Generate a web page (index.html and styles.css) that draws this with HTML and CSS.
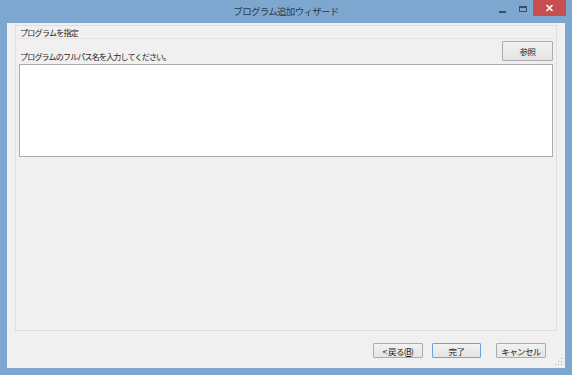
FILE: index.html
```html
<!DOCTYPE html>
<html>
<head>
    <title>プログラム追加ウィザード</title>
    <link rel="stylesheet" href="styles.css">
</head>
<body>
    <div class="window">
        <div class="titlebar">
            <div></div>
            <div class="title">プログラム追加ウィザード</div>
            <div class="controls">
                <span class="ctl-min"></span>
                <span class="ctl-max"></span>
                <span class="ctl-close">
                    <svg width="9" height="8" viewBox="0 0 9 8"><path d="M1.5 1 L7.5 7 M7.5 1 L1.5 7" stroke="#fff" stroke-width="1.6"/></svg>
                </span>
            </div>
        </div>

        <div class="client">
            <div class="page">
                <div class="group-head">プログラムを指定</div>
                <div class="browse-row">
                    <span class="label">プログラムのフルパス名を入力してください。</span>
                    <button class="btn browse-btn">参照</button>
                </div>
                <div class="path-box"></div>
            </div>

            <div class="footer">
                <button class="btn">&lt;&nbsp;戻る(<u>B</u>)</button>
                <button class="btn default-btn">完了</button>
                <button class="btn cancel-btn">キャンセル</button>
            </div>

            <!-- サイズ変更グリップ -->
            <svg class="grip" width="8" height="8" viewBox="0 0 8 8">
                <rect x="6" y="0" width="1" height="1" fill="#a8a8a8"/>
                <rect x="3" y="3" width="1" height="1" fill="#a8a8a8"/>
                <rect x="6" y="3" width="1" height="1" fill="#a8a8a8"/>
                <rect x="0" y="6" width="1" height="1" fill="#a8a8a8"/>
                <rect x="3" y="6" width="1" height="1" fill="#a8a8a8"/>
                <rect x="6" y="6" width="1" height="1" fill="#a8a8a8"/>
            </svg>
        </div>
    </div>
</body>
</html>
```

FILE: styles.css
```css
body {
    margin: 0;
    font-family: "Noto Sans CJK JP", "Noto Sans", sans-serif;
    background-color: #7ea7cf;
}
.window {
    display: flex;
    flex-direction: column;
    width: 572px;
    height: 375px;
    background-color: #7ea7cf;
}
.titlebar {
    display: grid;
    grid-template-columns: 1fr auto 1fr;
    height: 23px;
}
.title {
    font-size: 9.5px;
    letter-spacing: -0.7px;
    line-height: 23px;
    color: #2b3a4a;
}
.controls {
    display: flex;
    justify-content: flex-end;
    align-items: flex-start;
    padding-right: 6px;
}
.ctl-min {
    width: 7px;
    height: 2px;
    margin-top: 11px;
    margin-right: 13px;
    background-color: #3a4f66;
}
.ctl-max {
    box-sizing: border-box;
    width: 8px;
    height: 6px;
    margin-top: 6px;
    margin-right: 6px;
    border: 1px solid #3a4f66;
    border-top-width: 2px;
}
.ctl-close {
    display: flex;
    align-items: center;
    justify-content: center;
    width: 33px;
    height: 16px;
    background-color: #c74e4e;
}
.client {
    position: relative;
    flex: 1;
    display: flex;
    flex-direction: column;
    margin: 0 7px 7px 7px;
    background-color: #f0f0f0;
}
.page {
    display: flex;
    flex-direction: column;
    height: 306px;
    margin: 2px 8px 0 8px;
    padding: 0 3px;
    border: 1px solid #dedede;
    box-sizing: border-box;
    background-color: #f0f0f0;
}
.group-head {
    height: 10px;
    padding: 2px 1px 0 1px;
    font-size: 8px;
    line-height: 10px;
    letter-spacing: -0.7px;
    color: #1e1e1e;
    border-bottom: 1px solid #e2e2e2;
}
.browse-row {
    display: flex;
    justify-content: space-between;
    align-items: flex-end;
    height: 23px;
    padding: 0 0 2px 1px;
}
.label {
    font-size: 8px;
    line-height: 10px;
    letter-spacing: -0.8px;
    color: #1e1e1e;
}
.path-box {
    height: 93px;
    box-sizing: border-box;
    border: 1px solid #acacac;
    background-color: #ffffff;
}
.btn {
    box-sizing: border-box;
    height: 15px;
    padding: 0;
    font-family: "Noto Sans CJK JP", "Noto Sans", sans-serif;
    font-size: 8.5px;
    line-height: 12px;
    letter-spacing: -0.6px;
    color: #1e1e1e;
    border: 1px solid #acacac;
    border-radius: 1px;
    background: linear-gradient(#f2f2f2, #e4e4e4);
}
.browse-btn {
    width: 51px;
    height: 20px;
    margin-bottom: 1px;
}
.footer {
    display: flex;
    justify-content: flex-end;
    align-items: flex-start;
    gap: 9px;
    padding: 12px 19px 0 0;
}
.footer .btn {
    width: 50px;
}
.default-btn {
    width: 49px !important;
    border-color: #68a4e0;
}
.cancel-btn {
    margin-left: 6px;
}
.grip {
    position: absolute;
    right: 2px;
    bottom: 2px;
}
```
